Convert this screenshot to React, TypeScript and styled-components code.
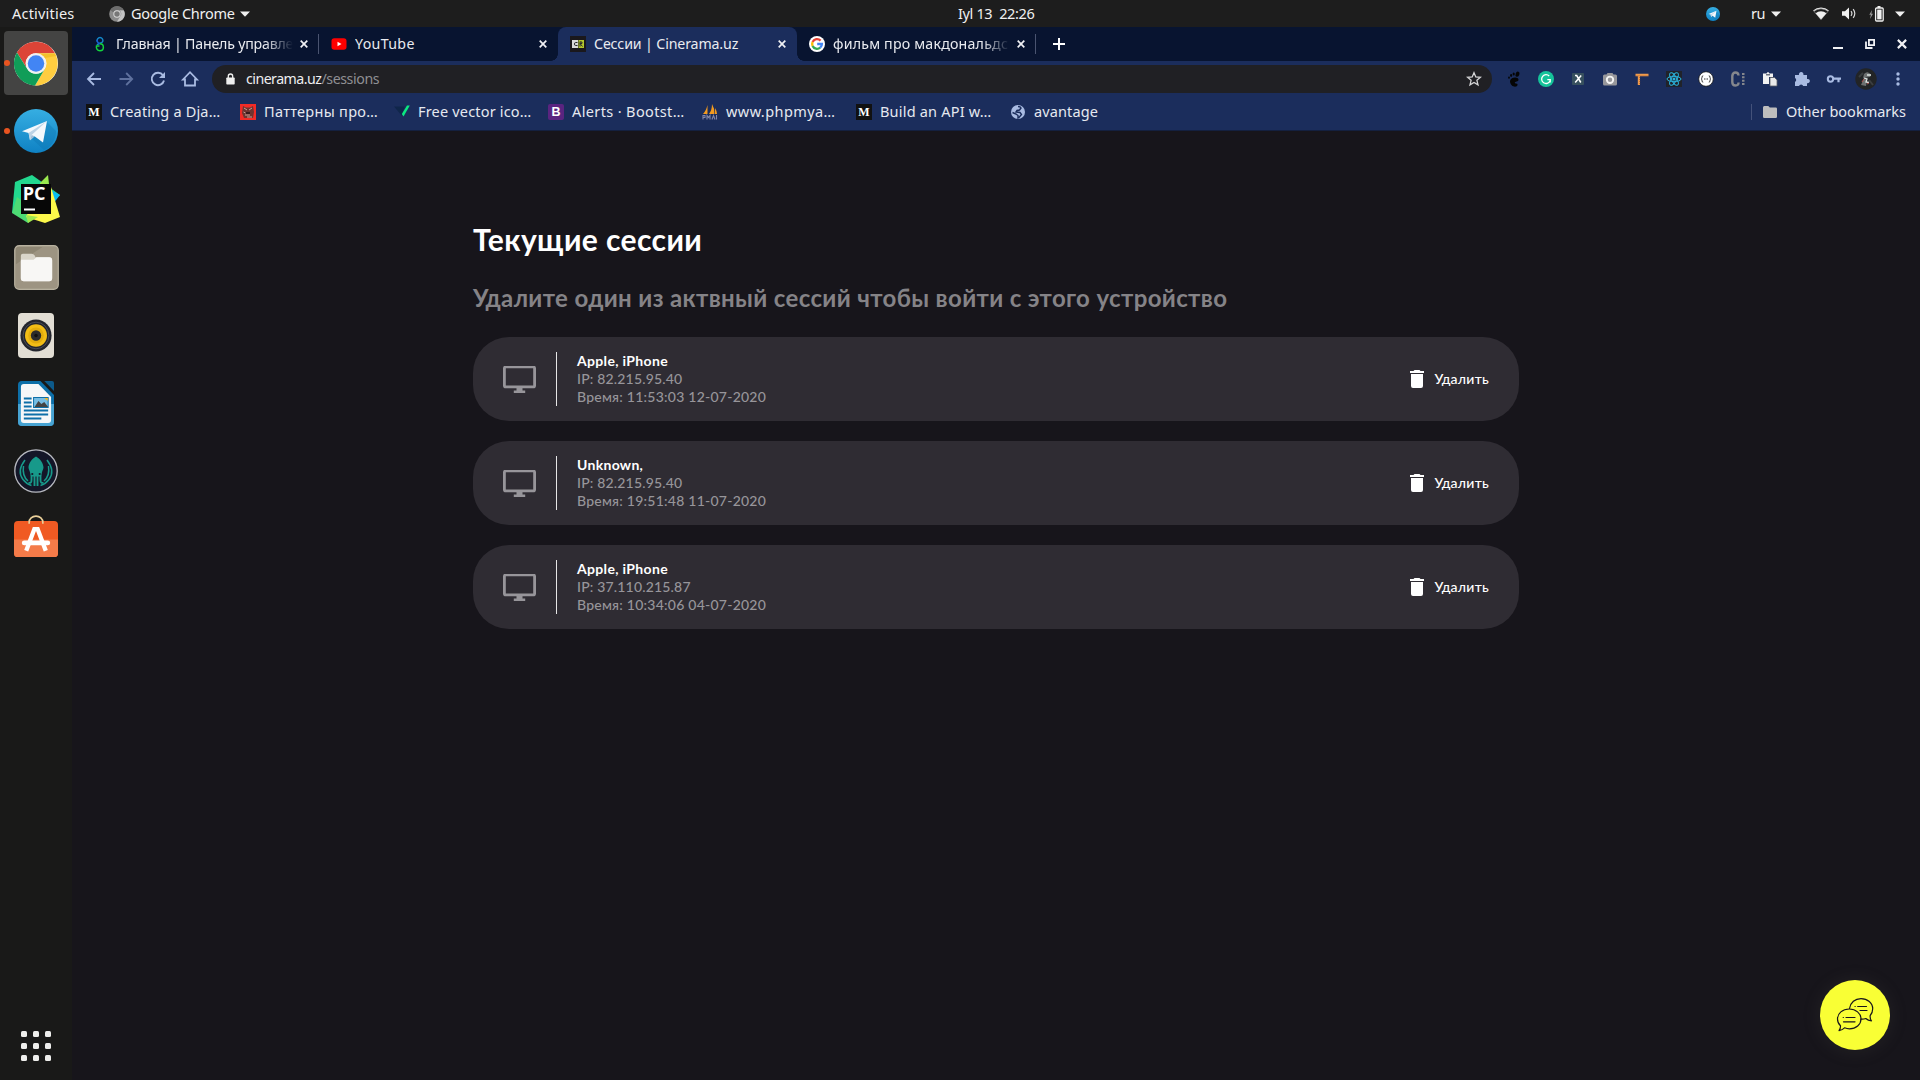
import React from 'react';
import styled, { createGlobalStyle, css } from 'styled-components';

const GlobalStyle = createGlobalStyle`
  * { box-sizing: border-box; }
  body { margin: 0; background: #17151b; overflow: hidden; }
  svg { display: block; flex: none; }
`;

const uiFont = css`font-family: 'Noto Sans', 'Open Sans', sans-serif;`;
const pageFont = css`font-family: Lato, 'Open Sans', sans-serif;`;

const Screen = styled.div`
  width: 1920px;
  height: 1080px;
  display: flex;
  flex-direction: column;
  ${uiFont}
`;

/* ---------- system panel ---------- */

const Panel = styled.header`
  height: 27px;
  flex: none;
  display: grid;
  grid-template-columns: 958px 1fr auto;
  align-items: center;
  background: #1d1d1d;
  color: #f0f0f0;
`;
const PanelSide = styled.div`
  display: flex;
  align-items: center;
  height: 26px;
`;
const PanelLeft = styled(PanelSide)`padding-left: 12px;`;
const PanelRight = styled(PanelSide)`padding-right: 15px;`;
const PanelText = styled.span<{ $ls?: number; $w?: number }>`
  font-size: 14.5px;
  line-height: 24px;
  padding-bottom: 2px;
  white-space: pre;
  letter-spacing: ${p => p.$ls ?? 0}px;
  ${p => p.$w && css`width: ${p.$w}px;`}
`;
const Gap = styled.span<{ $w: number }>`width: ${p => p.$w}px; flex: none;`;

const Body = styled.div`
  flex: 1;
  display: flex;
  min-height: 0;
`;

/* ---------- dock ---------- */

const Dock = styled.nav`
  width: 72px;
  flex: none;
  background: #191918;
  display: flex;
  flex-direction: column;
  gap: 4px;
  padding: 4px 4px 19px;
`;
const DockItem = styled.div<{ $active?: boolean }>`
  width: 64px;
  height: 64px;
  border-radius: 4px;
  display: flex;
  align-items: center;
  justify-content: center;
  position: relative;
  background: ${p => (p.$active ? '#444443' : 'transparent')};
`;
const RunningDot = styled.i`
  position: absolute;
  left: 0;
  top: 29px;
  width: 6px;
  height: 6px;
  border-radius: 50%;
  background: #e95420;
`;
const AppsGrid = styled.div`
  margin: auto auto 0;
  display: grid;
  grid-template-columns: repeat(3, 6px);
  gap: 6px;
`;
const AppsDot = styled.i`
  height: 6px;
  border-radius: 1.5px;
  background: #eeeeec;
`;

/* ---------- browser ---------- */

const Browser = styled.div`
  flex: 1;
  min-width: 0;
  display: flex;
  flex-direction: column;
`;
const TabStrip = styled.div`
  height: 34px;
  display: flex;
  align-items: center;
  background: #081430;
  padding-left: 8px;
`;
const TabBox = styled.div<{ $active?: boolean; $sep?: boolean }>`
  width: 239px;
  height: 34px;
  display: flex;
  align-items: center;
  padding: 0 11px 0 12px;
  position: relative;
  ${p => p.$active && css`
    background: #1b2d5c;
    border-radius: 8px 8px 0 0;
    &::before, &::after {
      content: '';
      position: absolute;
      bottom: 0;
      width: 7px;
      height: 7px;
    }
    &::before { left: -7px; background: radial-gradient(circle at 0 0, transparent 6.5px, #1b2d5c 7px); }
    &::after { right: -7px; background: radial-gradient(circle at 100% 0, transparent 6.5px, #1b2d5c 7px); }
  `}
  ${p => p.$sep && css`
    &::after {
      content: '';
      position: absolute;
      right: 0;
      top: 7px;
      width: 1px;
      height: 20px;
      background: #4a5470;
    }
  `}
`;
const TabTitle = styled.span<{ $ls: number; $fade?: boolean }>`
  flex: 1;
  margin-left: 8px;
  margin-right: 7px;
  overflow: hidden;
  white-space: nowrap;
  font-size: 14.2px;
  line-height: 24px;
  color: #e9ebf0;
  letter-spacing: ${p => p.$ls}px;
  ${p => p.$fade && css`mask-image: linear-gradient(90deg, #000 calc(100% - 28px), transparent);`}
`;
const WindowButtons = styled.div`
  margin-left: auto;
  display: flex;
  align-items: center;
  gap: 22px;
  padding-right: 13px;
`;

const Toolbar = styled.div`
  height: 36px;
  display: flex;
  align-items: center;
  background: #1b2d5c;
  padding-left: 12px;
`;
const NavButtons = styled.div`
  display: flex;
  gap: 12px;
  margin-right: 12px;
`;
const AddressBar = styled.div`
  width: 1280px;
  flex: none;
  height: 28px;
  border-radius: 14px;
  background: #202024;
  display: flex;
  align-items: center;
  padding: 0 10px 0 13.5px;
`;
const Host = styled.span`
  margin-left: 11.5px;
  font-size: 14.2px;
  line-height: 24px;
  color: #eeeef0;
  letter-spacing: -0.53px;
`;
const Path = styled.span`
  flex: 1;
  font-size: 14.2px;
  line-height: 24px;
  color: #8f8f93;
  letter-spacing: -0.42px;
`;
const Extensions = styled.div`
  display: flex;
  align-items: center;
  gap: 8px;
  margin-left: 10px;
`;

const BookmarkBar = styled.div`
  height: 34px;
  display: flex;
  align-items: center;
  background: #1b2d5c;
  border-bottom: 1px solid #14203f;
  padding: 0 14px 4px 14px;
`;
const BookmarkBox = styled.div<{ $w?: number }>`
  display: flex;
  align-items: center;
  gap: 8px;
  ${p => p.$w && css`width: ${p.$w}px;`}
`;
const BookmarkLabel = styled.span<{ $ls: number }>`
  font-size: 14.5px;
  line-height: 22px;
  padding-bottom: 2px;
  white-space: nowrap;
  color: #e6e9f0;
  letter-spacing: ${p => p.$ls}px;
`;
const OtherBookmarks = styled.div`
  margin-left: auto;
  display: flex;
  align-items: center;
  gap: 9px;
  padding-left: 12px;
  background: linear-gradient(#44527a, #44527a) no-repeat 0 50% / 1px 16px;
`;
const LetterIcon = styled.span<{ $bg: string; $serif?: boolean }>`
  width: 16px;
  height: 16px;
  flex: none;
  display: flex;
  align-items: center;
  justify-content: center;
  border-radius: ${p => (p.$serif ? 0 : '2px')};
  background: ${p => p.$bg};
  color: #fff;
  font: bold ${p => (p.$serif ? "12px/16px 'Liberation Serif', serif" : "12.5px/16px 'Liberation Sans', sans-serif")};
`;

/* ---------- page ---------- */

const Page = styled.main`
  flex: 1;
  background: #17151b;
  padding: 90px 401px 0;
  position: relative;
  ${pageFont}
`;
const Title = styled.h1`
  margin: 0 0 25.5px;
  font-size: 30px;
  line-height: 36px;
  font-weight: 700;
  letter-spacing: 0.4px;
  color: #fff;
`;
const Subtitle = styled.h2`
  margin: 0 0 25.5px;
  font-size: 24px;
  line-height: 29px;
  font-weight: 700;
  letter-spacing: 0.36px;
  white-space: nowrap;
  color: #858387;
`;
const SessionList = styled.div`
  display: flex;
  flex-direction: column;
  gap: 20px;
`;
const Card = styled.article`
  height: 84px;
  border-radius: 36px;
  background: #2f2c33;
  display: flex;
  align-items: center;
  padding: 0 30px;
`;
const Divider = styled.i`
  width: 1px;
  height: 54px;
  background: #e6e6e7;
  margin: 0 20px;
`;
const Info = styled.div`flex: 1;`;
const Device = styled.div<{ $ls: number }>`
  font-size: 14px;
  line-height: 18px;
  font-weight: 700;
  letter-spacing: ${p => p.$ls}px;
  color: #fff;
`;
const Detail = styled.div<{ $ls: number }>`
  font-size: 14px;
  line-height: 18px;
  font-weight: 500;
  letter-spacing: ${p => p.$ls}px;
  color: #97959a;
`;
const DeleteButton = styled.button`
  display: flex;
  align-items: center;
  gap: 10px;
  border: 0;
  padding: 0;
  background: none;
  color: #fff;
  ${pageFont}
  font-size: 14px;
  line-height: 18px;
  font-weight: 500;
  letter-spacing: 0.25px;
`;
const ChatButton = styled.div`
  position: absolute;
  right: 30px;
  bottom: 30px;
  width: 70px;
  height: 70px;
  border-radius: 50%;
  background: #f9ff35;
  box-shadow: 0 1px 20px rgba(120, 120, 110, 0.12);
`;

/* ---------- icons ---------- */

const Caret = () => <svg width="10" height="6" viewBox="0 0 10 6"><path d="M0 .5h10L5 5.8z" fill="#f0f0f0" /></svg>;
const Close = ({ s = 8 }: { s?: number }) => (
  <svg width={s} height={s} viewBox="0 0 8 8"><path d="M.7.7l6.6 6.6M7.3.7L.7 7.3" stroke="#f0f1f4" strokeWidth="1.7" /></svg>
);
const PanelChrome = () => (
  <svg width="16" height="16" viewBox="0 0 16 16">
    <circle cx="8" cy="8" r="7.8" fill="#8b8b8b" />
    <path d="M1.3 4A7.8 7.8 0 0 1 14.7 4H8a4 4 0 0 0-3.7 2.6z" fill="#6d6d6d" />
    <path d="M14.9 4.4A7.8 7.8 0 0 1 8 15.8l3.3-5.5A4 4 0 0 0 10.7 4.4z" fill="#c4c4c4" />
    <circle cx="8" cy="8" r="3.7" fill="#d8d8d8" /><circle cx="8" cy="8" r="2.7" fill="#777" />
  </svg>
);
const Telegram = ({ s }: { s: number }) => (
  <svg width={s} height={s} viewBox="0 0 44 44">
    <defs><linearGradient id={`tg${s}`} x1="0" y1="0" x2="0" y2="1"><stop offset="0" stopColor="#36aee2" /><stop offset="1" stopColor="#0f82c4" /></linearGradient></defs>
    <circle cx="22" cy="22" r="22" fill={`url(#tg${s})`} />
    <path d="M32 12l10 10a20 20 0 0 1-12 19L18 30z" fill="#0b74b0" opacity=".35" />
    <path d="M8 22.2L33 12l-4 21.4-8.5-6.2-4.5 4-1.4-7.3z" fill="#f4f8fc" />
    <path d="M14.6 24L33 12 17.6 26 16 31.2z" fill="#bdd3e6" />
    <path d="M17.6 26L16 31.2l4.5-4z" fill="#9dbdd8" />
  </svg>
);
const Wifi = () => (
  <svg width="16" height="13" viewBox="0 0 16 13">
    <path d="M.5 3.9a11.4 11.4 0 0 1 15 0" fill="none" stroke="#f0f0f0" strokeWidth="1.2" />
    <path d="M1 4.3a11 11 0 0 1 14 0L8 12.6z" fill="none" stroke="#9a9a9a" strokeWidth=".7" />
    <path d="M2.6 6.3a8.4 8.4 0 0 1 10.8 0L8 12.6z" fill="#f0f0f0" />
  </svg>
);
const Volume = () => (
  <svg width="15" height="13" viewBox="0 0 15 13">
    <path d="M0 4.2h3L7 .5v12L3 8.8H0z" fill="#f0f0f0" />
    <path d="M9 4.2q1.8 2.3 0 4.6M11.2 2.2q3.2 4.3 0 8.6" fill="none" stroke="#d8d8d8" strokeWidth="1.2" />
  </svg>
);
const Battery = () => (
  <svg width="15" height="16" viewBox="0 0 15 16">
    <path d="M3 4L.3 8.7h1.6L1 13l3-5.2H2.4z" fill="#9b9b9b" />
    <path d="M8.5 0h3v2h-3z" fill="#f0f0f0" />
    <rect x="6.6" y="2" width="7.6" height="13" rx="1" fill="none" stroke="#f0f0f0" strokeWidth="1.3" />
    <path d="M8.2 3.6h4.4v9.8H8.2z" fill="#f0f0f0" />
  </svg>
);

const ChromeLogo = () => (
  <svg width="44" height="45" viewBox="0 0 48 48">
    <circle cx="24" cy="24" r="24" fill="#fff" />
    <path d="M3.2 12A24 24 0 0 1 44.8 12.8H24A11.2 11.2 0 0 0 14.3 29.6z" fill="#dc4437" />
    <path d="M44.8 12.8A24 24 0 0 1 23 48l10.7-18.4A11.2 11.2 0 0 0 24 12.8z" fill="#ffcd40" />
    <path d="M3.2 12A24 24 0 0 0 23 48l10.7-18.4a11.2 11.2 0 0 1-19.4 0z" fill="#109d58" />
    <path d="M24 12.8h20.8l1 3L34 18z" fill="#e0a800" opacity=".35" />
    <circle cx="24" cy="24" r="11.2" fill="#f1f1f1" />
    <circle cx="24" cy="24" r="9" fill="#4285f4" />
  </svg>
);
const PyCharm = () => (
  <svg width="48" height="48" viewBox="0 0 48 48">
    <path d="M3 7L20 0l28 20-9 8-39 10z" fill="#22d88f" />
    <path d="M37 14l11 6-7 9z" fill="#08bdf4" />
    <path d="M28 8L36 0l2 18-10 4z" fill="#9be94e" />
    <path d="M0 38l5-16 22 16-11 10z" fill="#4ddb74" />
    <path d="M30 10l9 2 9 30-15 6-19-6z" fill="#fcf84a" />
    <path d="M14 40l12 2-10 6z" fill="#9fe84f" />
    <rect x="9" y="9" width="30" height="30" fill="#070707" />
    <text x="10.800" y="25.300" fontFamily="'Open Sans', sans-serif" fontWeight="700" fontSize="18" fill="#fff">PC</text>
    <rect x="12" y="33.5" width="11" height="2" fill="#fff" />
  </svg>
);
const Files = () => (
  <svg width="45" height="45" viewBox="0 0 46 46">
    <rect x=".8" y=".8" width="44.4" height="44.4" rx="4.5" fill="#8e8673" stroke="#b8b19f" strokeWidth="1.4" />
    <path d="M1.5 42V20L30 1.500h12l3 3V42l-3 2.500H4z" fill="#a9a18e" opacity=".55" />
    <path d="M7 11q0-2 2-2h9q2 0 3 1.600l1 1.900h14q3 0 3 3V34q0 3-3 3H10q-3 0-3-3z" fill="#d9d5ca" />
    <path d="M7 15h13l3-2.500h13q3 0 3 3V34q0 3-3 3H10q-3 0-3-3z" fill="#f8f7f5" />
  </svg>
);
const Rhythmbox = () => (
  <svg width="36" height="45" viewBox="0 0 37 45" preserveAspectRatio="none">
    <rect width="37" height="45" rx="4" fill="#e2ded4" />
    <circle cx="18.500" cy="22.500" r="16" fill="#23252d" />
    <circle cx="18.500" cy="22.500" r="13.300" fill="none" stroke="#494c56" />
    <circle cx="18.500" cy="22.500" r="11.300" fill="#f2bd16" />
    <circle cx="18.500" cy="22.500" r="8" fill="#e2ac0d" />
    <circle cx="18.500" cy="22.500" r="5.300" fill="#2b2b2b" />
    <circle cx="18.500" cy="22.500" r="1.800" fill="#111" />
  </svg>
);
const Writer = () => (
  <svg width="36" height="45" viewBox="0 0 37 45" preserveAspectRatio="none">
    <path d="M4 0h19l14 14v27q0 4-4 4H4q-4 0-4-4V4q0-4 4-4z" fill="#0d6fa8" />
    <path d="M0 23h37v18q0 4-4 4H4q-4 0-4-4z" fill="#47a3d2" />
    <path d="M27 0h8q2 0 2 2v8z" fill="#0c5a8a" />
    <path d="M6 3h15l13 13v23q0 3-3 3H6q-3 0-3-3V6q0-3 3-3z" fill="#f6f7f8" />
    <path d="M6 17.500h8M6 21.500h8M6 25.500h8M6 29.500h25M6 33.500h25M6 37.500h18" stroke="#0d6fa8" strokeWidth="2" />
    <rect x="16" y="16.500" width="15" height="10" fill="#77bde3" stroke="#0d6fa8" />
    <path d="M17 26l4-6 3 3 3-2 4 5z" fill="#444" /><path d="M27 17h3.500v3z" fill="#f5b81c" />
  </svg>
);
const Kraken = () => (
  <svg width="44" height="44" viewBox="0 0 44 44">
    <circle cx="22" cy="22" r="21.200" fill="#141628" stroke="#b7b9c0" strokeWidth="1.300" />
    <path d="M22 7.500c4 2 7.500 7 7.500 11 0 2-1.800 4-1.800 6.500q0 2-2 2.500H18.300q-2-.5-2-2.500c0-2.500-1.800-4.500-1.800-6.500 0-4 3.500-9 7.500-11z" fill="#17998a" />
    <path d="M20.500 27v10M23.500 27v10M17.500 26v5q0 4-3 2.500M26.500 26v5q0 4 3 2.500" stroke="#17998a" strokeWidth="1.900" fill="none" />
    <path d="M11 11Q2.500 22 9 30.500q3.500 4.500 8.500 6M33 11q8.500 11 2 19.500-3.500 4.500-8.500 6M9.500 17Q8 27 14 32M34.500 17Q36 27 30 32" stroke="#17998a" strokeWidth="1.500" fill="none" />
    <circle cx="18.300" cy="25" r="1.100" fill="#141628" /><circle cx="25.700" cy="25" r="1.100" fill="#141628" />
  </svg>
);
const Software = () => (
  <svg width="44" height="48" viewBox="0 0 45 49" preserveAspectRatio="none">
    <rect y="6" width="45" height="37" rx="4" fill="#f05a23" />
    <path d="M0 25h45v14q0 4-4 4H4q-4 0-4-4z" fill="#f47b49" />
    <path d="M15.500 9V7.500a7 6.300 0 0 1 14 0V9" fill="none" stroke="#ead09a" strokeWidth="1.700" />
    <path d="M12.500 36.500l8.300-22h3.400l8.300 22" fill="none" stroke="#fff" strokeWidth="4.400" />
    <rect x="8" y="26" width="29" height="5" rx="2.500" fill="#fff" />
  </svg>
);

const IconPanel = () => (
  <svg width="16" height="16" viewBox="0 0 16 16" fill="none" strokeWidth="1.500">
    <path d="M5.300 5.500a2.900 2.900 0 1 1 5.400 0C10 7.500 6.300 7 5 9" stroke="#1387c8" />
    <path d="M5 3.800q0 3.200 3 3.900" stroke="#1a5ed0" />
    <path d="M8 7.700c4.500 0 4.500 7 0 7-3 0-4-2.500-3.500-4.700h3" stroke="#13d33d" />
  </svg>
);
const IconYouTube = () => (
  <svg width="16" height="16" viewBox="0 0 16 16"><rect x=".5" y="2.200" width="15" height="11.600" rx="2.800" fill="#f00" /><path d="M6.500 5.700v4.600l4-2.300z" fill="#fff" /></svg>
);
const IconCinerama = () => (
  <svg width="16" height="16" viewBox="0 0 16 16">
    <rect width="16" height="16" fill="#1a181c" />
    <path d="M2 4h6v8H2z" fill="#d9d9d9" /><path d="M8.500 4H14v8H8.500z" fill="#b4c72c" />
    <path d="M7.500 6.500h-2q-1 0-1 1.500t1 1.500h2M10 5.500v5M10 6h2v1.500h-2l2.500 3" stroke="#29282c" fill="none" />
  </svg>
);
const IconGoogle = () => (
  <svg width="16" height="16" viewBox="0 0 16 16">
    <circle cx="8" cy="8" r="8" fill="#fff" />
    <g fill="none" strokeWidth="2.300">
      <path d="M11.600 4.600A4.900 4.900 0 0 0 3.600 6" stroke="#ea4335" />
      <path d="M3.600 6a4.900 4.900 0 0 0 0 4" stroke="#fbbc05" />
      <path d="M3.600 10a4.900 4.900 0 0 0 7.600 1.700" stroke="#34a853" />
      <path d="M11.200 11.700Q12.900 10.200 12.900 8H8.200" stroke="#4285f4" />
    </g>
  </svg>
);

const navColor = '#a9bbe2';
const Back = ({ dim }: { dim?: boolean }) => (
  <svg width="20" height="20" viewBox="0 0 20 20">
    <path d={dim ? 'M3.500 10h12.500M10.200 4l6 6-6 6' : 'M17 10H4.500M10 4l-6 6 6 6'} fill="none" stroke={dim ? '#5f719e' : navColor} strokeWidth="1.800" />
  </svg>
);
const Reload = () => (
  <svg width="20" height="20" viewBox="0 0 20 20">
    <path d="M15 6.300A6.200 6.200 0 1 0 16 11.500" fill="none" stroke={navColor} strokeWidth="1.900" />
    <path d="M17 3v6h-6z" fill={navColor} />
  </svg>
);
const Home = () => (
  <svg width="20" height="20" viewBox="0 0 20 20">
    <path d="M3 10.500L10 3.200l7 7.300h-2v6H5v-6z" fill="none" stroke={navColor} strokeWidth="1.800" />
  </svg>
);
const Lock = () => (
  <svg width="9" height="12" viewBox="0 0 9 12">
    <path d="M2.300 5V3.200a2.200 2.200 0 0 1 4.400 0V5" fill="none" stroke="#eee" strokeWidth="1.300" /><rect x=".3" y="4.500" width="8.400" height="7" rx=".8" fill="#eee" />
  </svg>
);
const Star = () => (
  <svg width="16" height="16" viewBox="0 0 16 16"><path d="M8 1.700l1.800 4.200 4.600.4-3.500 3 1.100 4.500L8 11.400l-4 2.400 1.100-4.500-3.500-3 4.600-.4z" fill="none" stroke="#d5d5d7" strokeWidth="1.300" /></svg>
);

const Ext = ({ children }: { children: React.ReactNode }) => <svg width="24" height="24" viewBox="-12 -12 24 24">{children}</svg>;
const ExtensionIcons = () => (
  <Extensions>
    <Ext>
      <g fill="#050505">
        <ellipse cx="3.500" cy="-4.800" rx="1.900" ry="2.700" transform="rotate(20 3.500 -4.800)" />
        <ellipse cx="-.3" cy="-5" rx="1.100" ry="1.600" /><ellipse cx="-2.900" cy="-3.500" rx="1" ry="1.400" /><ellipse cx="-5" cy="-1.300" rx=".9" ry="1.100" />
        <path d="M-4 2C-3-2.500 4.500-2.500 4.500.8c0 2.200-3.700 1.600-3.700 3 0 1.300 2.800.2 2.800 1.900C3.400 9-3.800 8.500-4 2z" />
      </g>
    </Ext>
    <Ext>
      <circle r="8" fill="#15c39a" />
      <path d="M3.200-3A4.400 4.400 0 1 0 4 2M4.200 3.600V.7H1.300" fill="none" stroke="#fff" strokeWidth="1.300" />
    </Ext>
    <Ext>
      <rect x="-6" y="-6" width="12" height="12" rx="1" fill="#37505e" />
      <path d="M-3-3.500h1.700L2.800 3.500M3.200-3.500l-6 7" fill="none" stroke="#fff" strokeWidth="1.500" />
    </Ext>
    <Ext>
      <path d="M-7-3q0-1.500 1.500-1.500h2L-2.500-6h5l1 1.500h2Q7-4.500 7-3v8q0 1.500-1.500 1.500h-11Q-7 6.500-7 5z" fill="#97979b" />
      <circle cy=".8" r="3.200" fill="none" stroke="#f4f4f4" strokeWidth="1.900" />
    </Ext>
    <Ext>
      <path d="M-6.500-5.200H6.500v2.400H-2V6h-2.200v-8.800h-2.300z" fill="#ef9a4c" /><path d="M-6.500-3.200h13M-2.300-2v8" stroke="#8d4c27" strokeWidth=".6" strokeDasharray="1 1" />
    </Ext>
    <Ext>
      <rect x="-8" y="-8" width="16" height="16" fill="#20232a" />
      <g fill="none" stroke="#2bb5de" strokeWidth="1">
        <ellipse rx="7" ry="2.700" /><ellipse rx="7" ry="2.700" transform="rotate(60)" /><ellipse rx="7" ry="2.700" transform="rotate(120)" />
      </g>
      <circle r="1.500" fill="#2bb5de" />
    </Ext>
    <Ext>
      <circle r="7.300" fill="#fff" stroke="#111" strokeWidth=".8" />
      <path d="M-2.800-3.200q-1.300 0-1.200 1.500Q-4-.2-4.800 0q.9.200.8 1.700-.1 1.500 1.200 1.500M2.800-3.200q1.300 0 1.200 1.500Q4-.2 4.800 0q-.9.200-.8 1.700.1 1.500-1.200 1.500M-2 0h1M-.5 0h1M1 0h1" fill="none" stroke="#333" strokeWidth="1" />
    </Ext>
    <Ext>
      <path d="M.5-3.500Q.3-6.500-2.500-6.500T-5.700-3v6q0 3.500 3.200 3.500T.5 3.500" fill="none" stroke="#85878d" strokeWidth="2.400" />
      <path d="M4-5h2.500M4-1.700h2.500M4 1.700h2.500M4 5h2.500" stroke="#85878d" strokeWidth="2" />
    </Ext>
    <Ext>
      <path d="M-7-5.500h3.500Q-2-8.500-.5-5.500H3V-2H-1v7h-6z" fill="#f2f2f2" /><path d="M-4-5h4v1.500h-4z" fill="#6d7280" />
      <path d="M0-1.500h4.500L7 1v6H0z" fill="#e9e9e9" stroke="#5a5d66" strokeWidth=".8" />
    </Ext>
    <Ext>
      <path d="M-7-4h4a2.300 2.300 0 1 1 4.400 0H5V0a2.200 2.200 0 1 1 0 4.200V7H1.200a2.200 2.200 0 0 0-4.200 0h-4V2.800a2.100 2.100 0 0 0 0-3.800z" fill={navColor} />
    </Ext>
    <Ext>
      <circle cx="-3.500" r="2.700" fill="none" stroke={navColor} strokeWidth="2" /><path d="M-1-.3h8M4.500 0v3.200" stroke={navColor} strokeWidth="2.200" />
    </Ext>
    <Ext>
      <circle r="10.700" fill="#222426" />
      <path d="M-2-5Q2-9 5-4L4-2-3-1zM-5 6l3-7 3 2-1 6z" fill="#6d7070" /><path d="M-7-2l4-4M3 1l4 5" stroke="#3b3e40" strokeWidth="2" />
      <path d="M1-4h4M-2-1l3 1-1 3 3 .5" stroke="#dce3e1" strokeWidth="1.300" fill="none" /><path d="M-4 3l2-3M1 5l2-1" stroke="#b3534f" />
    </Ext>
    <Ext>
      <g fill={navColor}><circle cy="-5" r="1.700" /><circle r="1.700" /><circle cy="5" r="1.700" /></g>
    </Ext>
  </Extensions>
);

const IconDemon = () => (
  <svg width="16" height="16" viewBox="0 0 16 16">
    <rect width="16" height="16" fill="#f12b26" /><path d="M3 2l3 1.500h4L13 2l1 6-1 6H4L2 9z" fill="#6e3430" />
    <path d="M4 4l3 2M12 4L9 6M5 11h5M7 13h5M3.500 8l2 1" stroke="#c9a095" /><path d="M6 8h4v2H6z" fill="#3a1a1b" />
  </svg>
);
const IconVector = () => (
  <svg width="16" height="16" viewBox="0 0 16 16"><path d="M0 2.500h10.500L8 12z" fill="#10264a" /><path d="M13 1.500h2.800L9.500 12.500 7.800 10z" fill="#0be881" /></svg>
);
const IconPma = () => (
  <svg width="16" height="16" viewBox="0 0 16 16">
    <path d="M5.500 1v9H1q3-3 4.500-9zM10 0q3 5 2.500 10H7Q10 6 10 0zM13 4q2 3 2 6h-2z" fill="#f29a1f" />
    <path d="M1 15.500v-4h2v2H1M5 15.500v-4l1.500 2 1.500-2v4M10 15.500l1.500-4 1.500 4M14.500 11v4.500" stroke="#8085a8" fill="none" strokeWidth="1.100" />
  </svg>
);
const IconGlobe = () => (
  <svg width="16" height="16" viewBox="0 0 16 16">
    <circle cx="8" cy="8" r="7" fill={navColor} />
    <path d="M8 2.500q2.500 0 3 1.500L9.500 6 7 6.500 6 8l4 .5 1.500 2L9 13.500 8 14v-2.500L6 10 2.500 8.500" fill="none" stroke="#1b2d5c" strokeWidth="1.400" />
  </svg>
);
const IconFolder = () => (
  <svg width="14" height="12" viewBox="0 0 14 12"><path d="M0 1.500Q0 0 1.300 0h4l1.500 1.500h6Q14 1.500 14 2.800v7.900q0 1.300-1.300 1.300H1.300Q0 12 0 10.700z" fill="#bdbdbd" /></svg>
);

const Monitor = () => (
  <svg width="33" height="27" viewBox="0 1 33 27">
    <rect x="1.400" y="1.900" width="30.200" height="20" rx="1.500" fill="none" stroke="#97959a" strokeWidth="2.800" />
    <path d="M13.500 22h6v3.500h2.700V29H10.800v-3.500h2.700z" fill="#97959a" />
  </svg>
);
const Trash = () => (
  <svg width="14" height="18" viewBox="0 0 14 18"><path d="M0 1h3.500l1-1h5l1 1H14v2H0zM1 4h12v12q0 2-2 2H3q-2 0-2-2z" fill="#fff" /></svg>
);
const Chat = () => (
  <svg width="70" height="70" viewBox="20 20 70 70" fill="none" stroke="#17151b" strokeWidth="1.200" strokeLinecap="round" strokeLinejoin="round">
    <path d="M49.500 48.500C50.500 42.500 55 38.600 61 38.600c6.500 0 11.700 4.400 11.700 10.200 0 3-1 5-2.500 6.700q-.4 3.500 1.300 5.300-3.500-.2-5.700-2.300-2.300.9-5 .6" />
    <path d="M49.300 49c6.500 0 11.700 4.400 11.700 10s-5 9.800-11.500 9.800q-2.500 0-5-1-2 2-5.500 2.900 1.700-2 1.500-5-3-2.600-3-6.700c0-5.600 5-10 11.800-10z" />
    <path d="M46 57.500h9M43.200 57.500h.2M43.500 61.800h11.500M57.700 46.500h8.800M55 46.500h.2M60 50.500h7" />
  </svg>
);

/* ---------- data ---------- */

const tabs = [
  { title: 'Главная | Панель управле', icon: <IconPanel />, ls: -0.2, fade: true, sep: true },
  { title: 'YouTube', icon: <IconYouTube />, ls: 0.35 },
  { title: 'Сессии | Cinerama.uz', icon: <IconCinerama />, ls: -0.14, active: true },
  { title: 'фильм про макдональдс', icon: <IconGoogle />, ls: 0.2, fade: true, sep: true },
];
const bookmarks = [
  { label: 'Creating a Dja…', icon: <LetterIcon $bg="#111" $serif>M</LetterIcon>, ls: 0.18, w: 154 },
  { label: 'Паттерны про…', icon: <IconDemon />, ls: 0.3, w: 154 },
  { label: 'Free vector ico…', icon: <IconVector />, ls: 0.18, w: 154 },
  { label: 'Alerts · Bootst…', icon: <LetterIcon $bg="#5a2480">B</LetterIcon>, ls: 0.37, w: 154 },
  { label: 'www.phpmya…', icon: <IconPma />, ls: 0.42, w: 154 },
  { label: 'Build an API w…', icon: <LetterIcon $bg="#111" $serif>M</LetterIcon>, ls: 0.2, w: 154 },
  { label: 'avantage', icon: <IconGlobe />, ls: 0.12, w: 100 },
];
const sessions = [
  { device: 'Apple, iPhone', ls: 0.33, ip: '82.215.95.40', time: '11:53:03 12-07-2020' },
  { device: 'Unknown,', ls: 0.3, ip: '82.215.95.40', time: '19:51:48 11-07-2020' },
  { device: 'Apple, iPhone', ls: 0.33, ip: '37.110.215.87', time: '10:34:06 04-07-2020' },
];
const dockApps = [
  { icon: <ChromeLogo />, running: true, active: true },
  { icon: <Telegram s={44} />, running: true },
  { icon: <PyCharm /> },
  { icon: <Files /> },
  { icon: <Rhythmbox /> },
  { icon: <Writer /> },
  { icon: <Kraken /> },
  { icon: <Software /> },
];

export default function App() {
  return (
    <Screen>
      <GlobalStyle />
      <Panel>
        <PanelLeft>
          <PanelText $ls={0.2} $w={97}>Activities</PanelText>
          <PanelChrome />
          <Gap $w={6} />
          <PanelText $ls={-0.26} $w={109}>Google Chrome</PanelText>
          <Caret />
        </PanelLeft>
        <PanelText $ls={-0.35}>{'Iyl 13  22:26'}</PanelText>
        <PanelRight>
          <Telegram s={14} />
          <Gap $w={31} />
          <PanelText $ls={-0.6} $w={20}>ru</PanelText>
          <Caret />
          <Gap $w={32} />
          <Wifi />
          <Gap $w={13} />
          <Volume />
          <Gap $w={12} />
          <Battery />
          <Gap $w={11} />
          <Caret />
        </PanelRight>
      </Panel>
      <Body>
        <Dock>
          {dockApps.map((a, i) => (
            <DockItem key={i} $active={a.active}>
              {a.running && <RunningDot />}
              {a.icon}
            </DockItem>
          ))}
          <AppsGrid>{Array.from({ length: 9 }, (_, i) => <AppsDot key={i} />)}</AppsGrid>
        </Dock>
        <Browser>
          <TabStrip>
            {tabs.map(t => (
              <TabBox key={t.title} $active={t.active} $sep={t.sep}>
                {t.icon}
                <TabTitle $ls={t.ls} $fade={t.fade}>{t.title}</TabTitle>
                <Close />
              </TabBox>
            ))}
            <Gap $w={17} />
            <svg width="12" height="12" viewBox="0 0 12 12"><path d="M6 0v12M0 6h12" stroke="#fff" strokeWidth="2" /></svg>
            <WindowButtons>
              <svg width="10" height="10" viewBox="0 0 10 10"><path d="M0 9h10" stroke="#f0f1f4" strokeWidth="2" /></svg>
              <svg width="10" height="10" viewBox="0 0 10 10"><path d="M3.900.9h5.200v5.200H3.900zM1 2.500V9h6.500" fill="none" stroke="#f0f1f4" strokeWidth="1.800" /></svg>
              <Close s={10} />
            </WindowButtons>
          </TabStrip>
          <Toolbar>
            <NavButtons><Back /><Back dim /><Reload /><Home /></NavButtons>
            <AddressBar>
              <Lock />
              <Host>cinerama.uz</Host>
              <Path>/sessions</Path>
              <Star />
            </AddressBar>
            <ExtensionIcons />
          </Toolbar>
          <BookmarkBar>
            {bookmarks.map((b, i) => (
              <BookmarkBox key={i} $w={b.w}>
                {b.icon}
                <BookmarkLabel $ls={b.ls}>{b.label}</BookmarkLabel>
              </BookmarkBox>
            ))}
            <OtherBookmarks>
              <IconFolder />
              <BookmarkLabel $ls={0}>Other bookmarks</BookmarkLabel>
            </OtherBookmarks>
          </BookmarkBar>
          <Page>
            <Title>Текущие сессии</Title>
            <Subtitle>Удалите один из актвный сессий чтобы войти с этого устройство</Subtitle>
            <SessionList>
              {sessions.map((s, i) => (
                <Card key={i}>
                  <Monitor />
                  <Divider />
                  <Info>
                    <Device $ls={s.ls}>{s.device}</Device>
                    <Detail $ls={0.18}>IP: {s.ip}</Detail>
                    <Detail $ls={0.24}>Время: {s.time}</Detail>
                  </Info>
                  <DeleteButton><Trash />Удалить</DeleteButton>
                </Card>
              ))}
            </SessionList>
            <ChatButton><Chat /></ChatButton>
          </Page>
        </Browser>
      </Body>
    </Screen>
  );
}
